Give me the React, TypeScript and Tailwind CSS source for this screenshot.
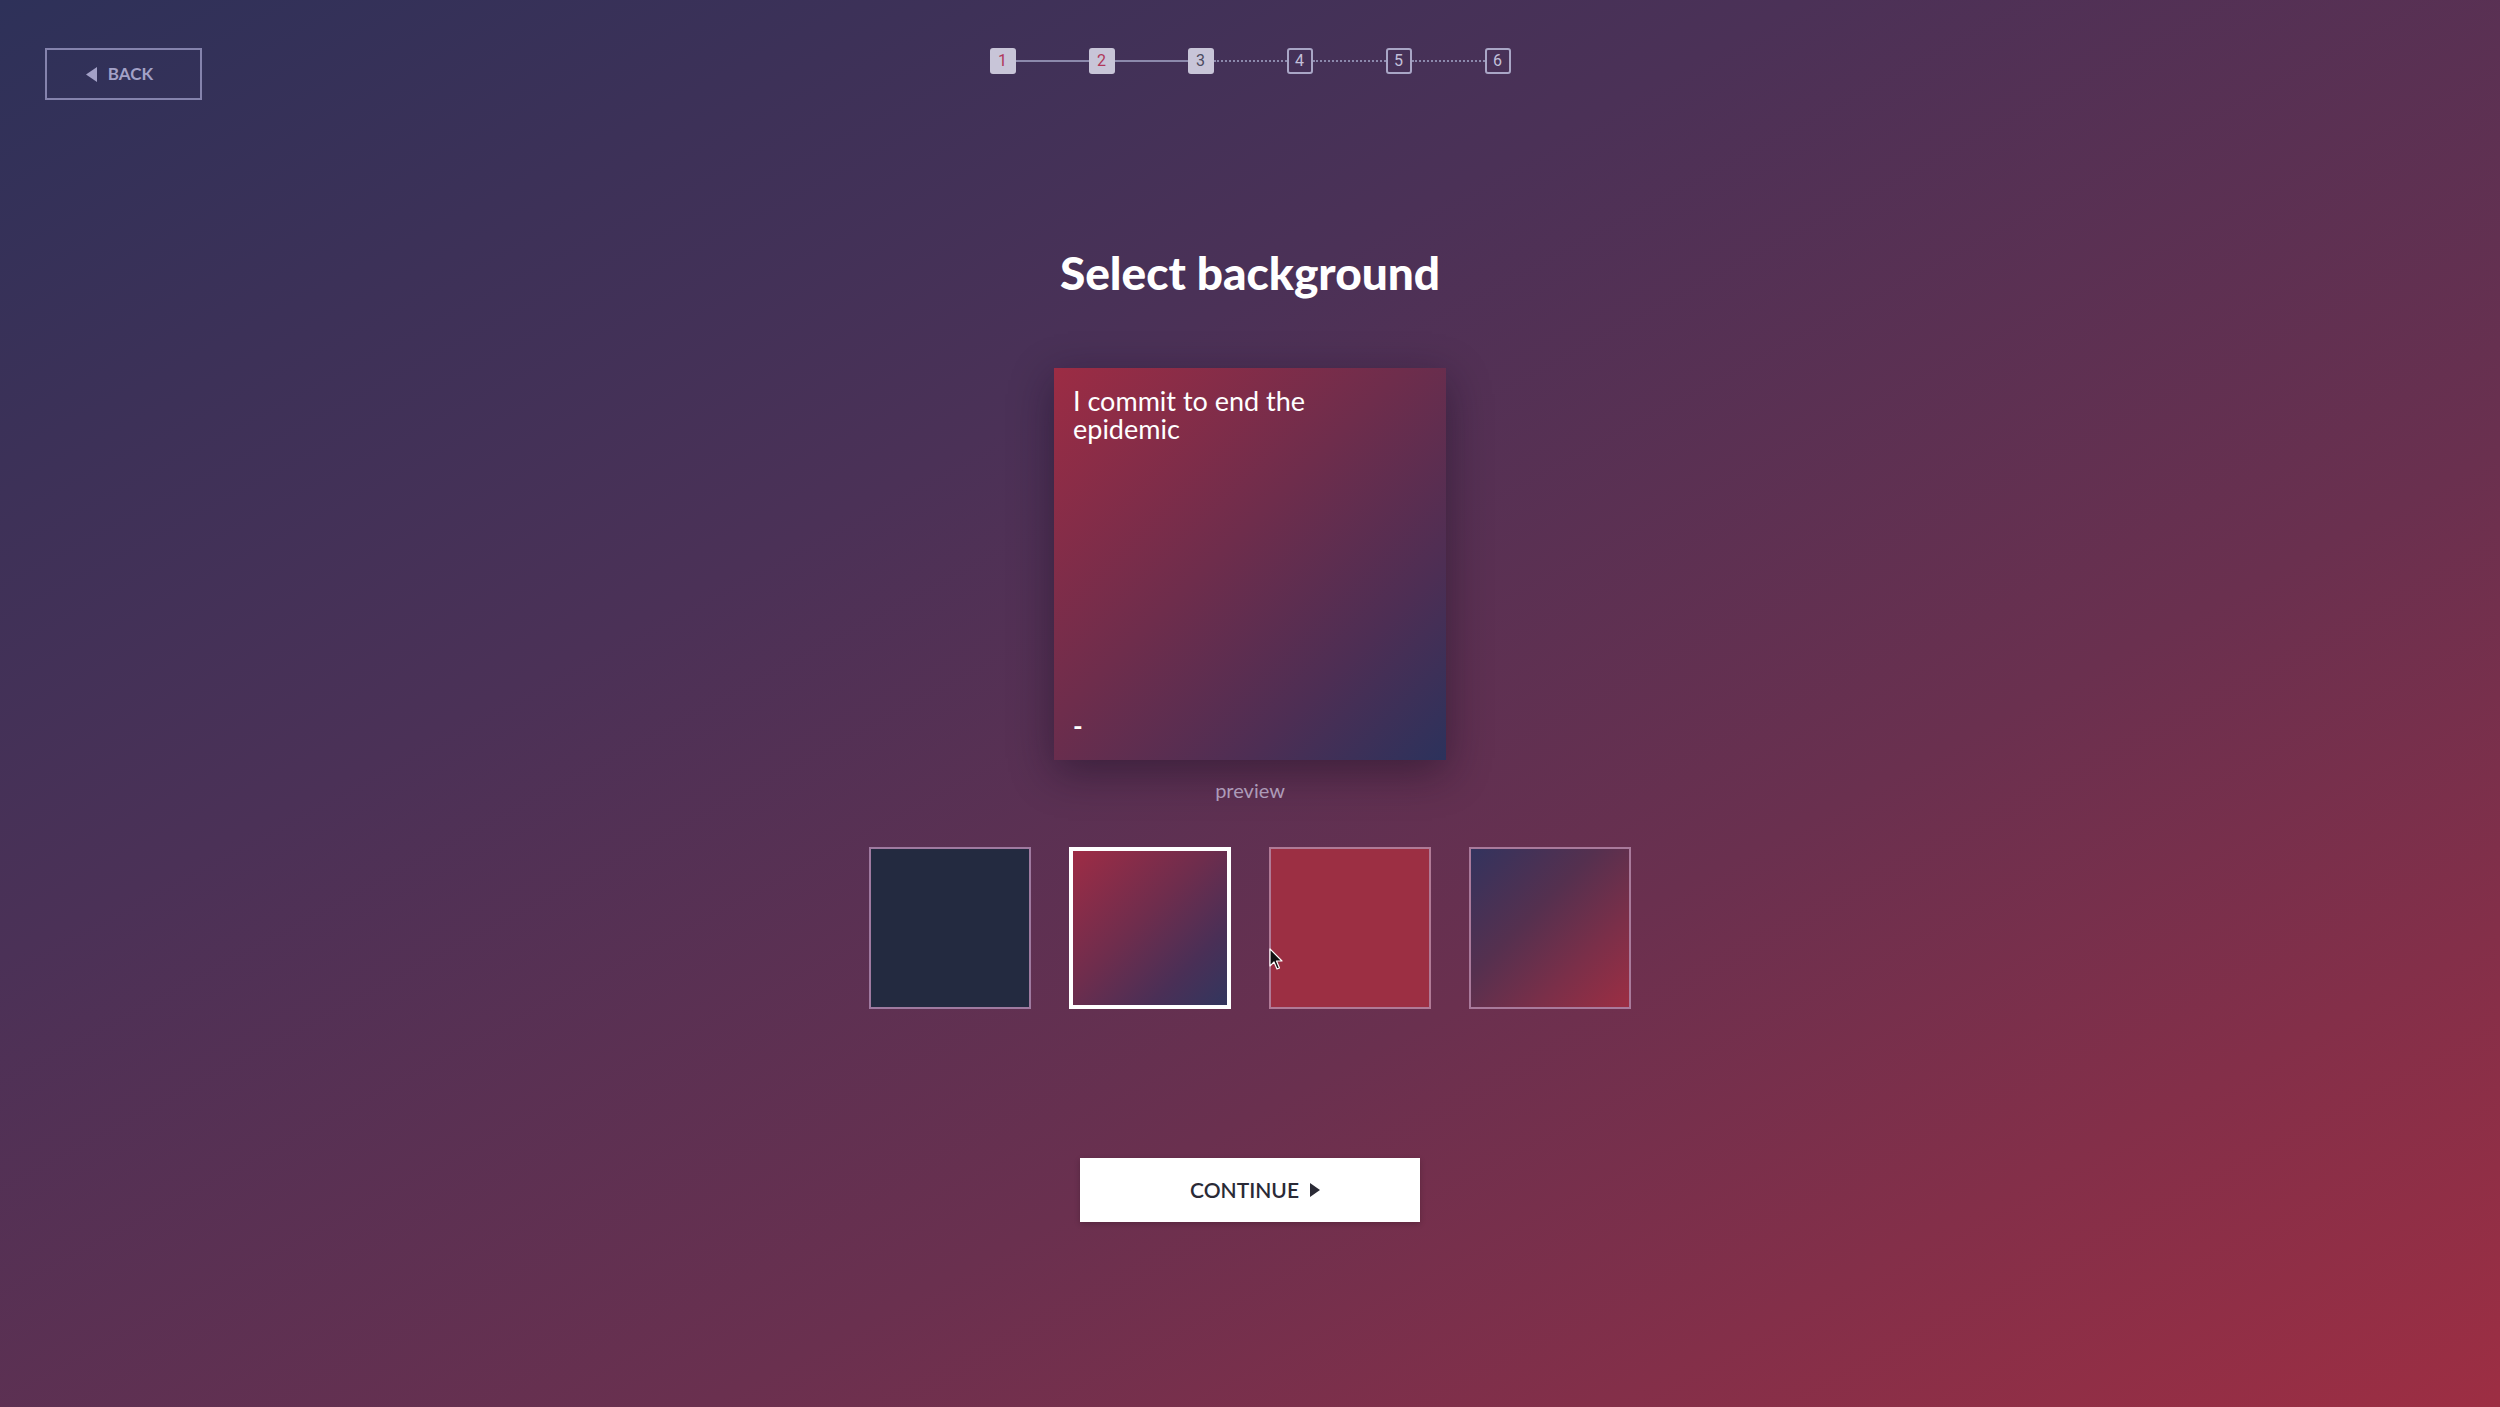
import React from "react";

const steps = [
  { n: 1, state: "done" },
  { n: 2, state: "done" },
  { n: 3, state: "current" },
  { n: 4, state: "todo" },
  { n: 5, state: "todo" },
  { n: 6, state: "todo" },
];

function StepBox({ n, state }: { n: number; state: string }) {
  if (state === "todo") {
    return (
      <div className="flex h-[26px] w-[26px] items-center justify-center rounded-[3px] border-2 border-[#a9a6c6] text-[16px] text-[#c3c0da]">
        {n}
      </div>
    );
  }
  return (
    <div
      className={
        state === "done"
          ? "flex h-[26px] w-[26px] items-center justify-center rounded-[3px] bg-[#c8c5d8] text-[16px] text-[#b0375a]"
          : "flex h-[26px] w-[26px] items-center justify-center rounded-[3px] bg-[#c8c5d8] text-[16px] text-[#4c4b60]"
      }
    >
      {n}
    </div>
  );
}

function Stepper() {
  return (
    <div className="flex items-center font-['Roboto',sans-serif]">
      {steps.map((s, i) => (
        <React.Fragment key={s.n}>
          <StepBox n={s.n} state={s.state} />
          {i < steps.length - 1 &&
            (i < 2 ? (
              <div className="h-[2px] w-[73px] bg-[#8c89ac]" />
            ) : (
              <div className="w-[73px] border-t-2 border-dotted border-[#8c89ac]" />
            ))}
        </React.Fragment>
      ))}
    </div>
  );
}

export default function App() {
  return (
    <div className="relative flex h-[1407px] w-full flex-col overflow-hidden bg-[linear-gradient(152deg,#2e3159_0%,#4b3157_35%,#6a304f_65%,#9d2e43_100%)] font-['Lato',sans-serif]">
      {/* header */}
      <div className="grid grid-cols-[1fr_auto_1fr] items-start px-[45px] pt-[48px]">
        <div>
          <button className="flex h-[52px] w-[157px] items-center justify-center gap-[11px] border-2 border-[#8583ad] pr-[8px] text-[17px] font-bold text-[#a3a1c7]">
            <svg width="11" height="15" viewBox="0 0 11 15">
              <path d="M11 0 L0 7.5 L11 15 Z" fill="#a3a1c7" />
            </svg>
            BACK
          </button>
        </div>
        <Stepper />
        <div />
      </div>

      {/* main */}
      <div className="flex flex-col items-center">
        <h1 className="mt-[147px] text-[46px] font-black leading-[52px] text-white">
          Select background
        </h1>

        <div className="mt-[69px] flex h-[392px] w-[392px] flex-col justify-between bg-[linear-gradient(135deg,#9c2c44_0%,#6e2d4c_45%,#4d2e54_75%,#2c325c_100%)] px-[19px] pb-[20px] pt-[19px] text-white shadow-[0_12px_40px_rgba(20,10,30,0.45)]">
          <p className="max-w-[300px] text-[27px] leading-[28px]">I commit to end the epidemic</p>
          <p className="text-[26px] font-bold leading-[28px]">-</p>
        </div>

        <p className="mt-[15px] text-[20px] text-[#ad9bb8]">preview</p>

        <div className="mt-[42px] flex gap-[38px]">
          <div className="h-[162px] w-[162px] border-2 border-[#9f7aa0] bg-[#232a40]" />
          <div className="h-[162px] w-[162px] border-4 border-white bg-[linear-gradient(135deg,#9e2c45_0%,#6e2d4d_45%,#4a2f56_75%,#32365e_100%)]" />
          <div className="h-[162px] w-[162px] border-2 border-[#b07a96] bg-[#9c2f43]" />
          <div className="h-[162px] w-[162px] border-2 border-[#a97a9b] bg-[linear-gradient(135deg,#33335e_0%,#55304f_40%,#7a2f49_70%,#9c2e43_100%)]" />
        </div>

        <button className="mt-[149px] flex h-[64px] w-[340px] items-center justify-center gap-[11px] bg-white pl-[10px] text-[21px] font-semibold text-[#2a2a36] shadow-[0_2px_6px_rgba(0,0,0,0.2)]">
          CONTINUE
          <svg width="10" height="14" viewBox="0 0 10 14">
            <path d="M0 0 L10 7 L0 14 Z" fill="#2a2a36" />
          </svg>
        </button>
      </div>

      {/* mouse cursor */}
      <svg
        className="absolute left-[1269px] top-[948px]"
        width="15"
        height="23"
        viewBox="0 0 15 23"
      >
        <path
          d="M1 1 L1 18 L5 14 L8 21 L10.5 20 L7.5 13 L13 13 Z"
          fill="#111"
          stroke="#fff"
          strokeWidth="1.2"
          strokeLinejoin="round"
        />
      </svg>
    </div>
  );
}
